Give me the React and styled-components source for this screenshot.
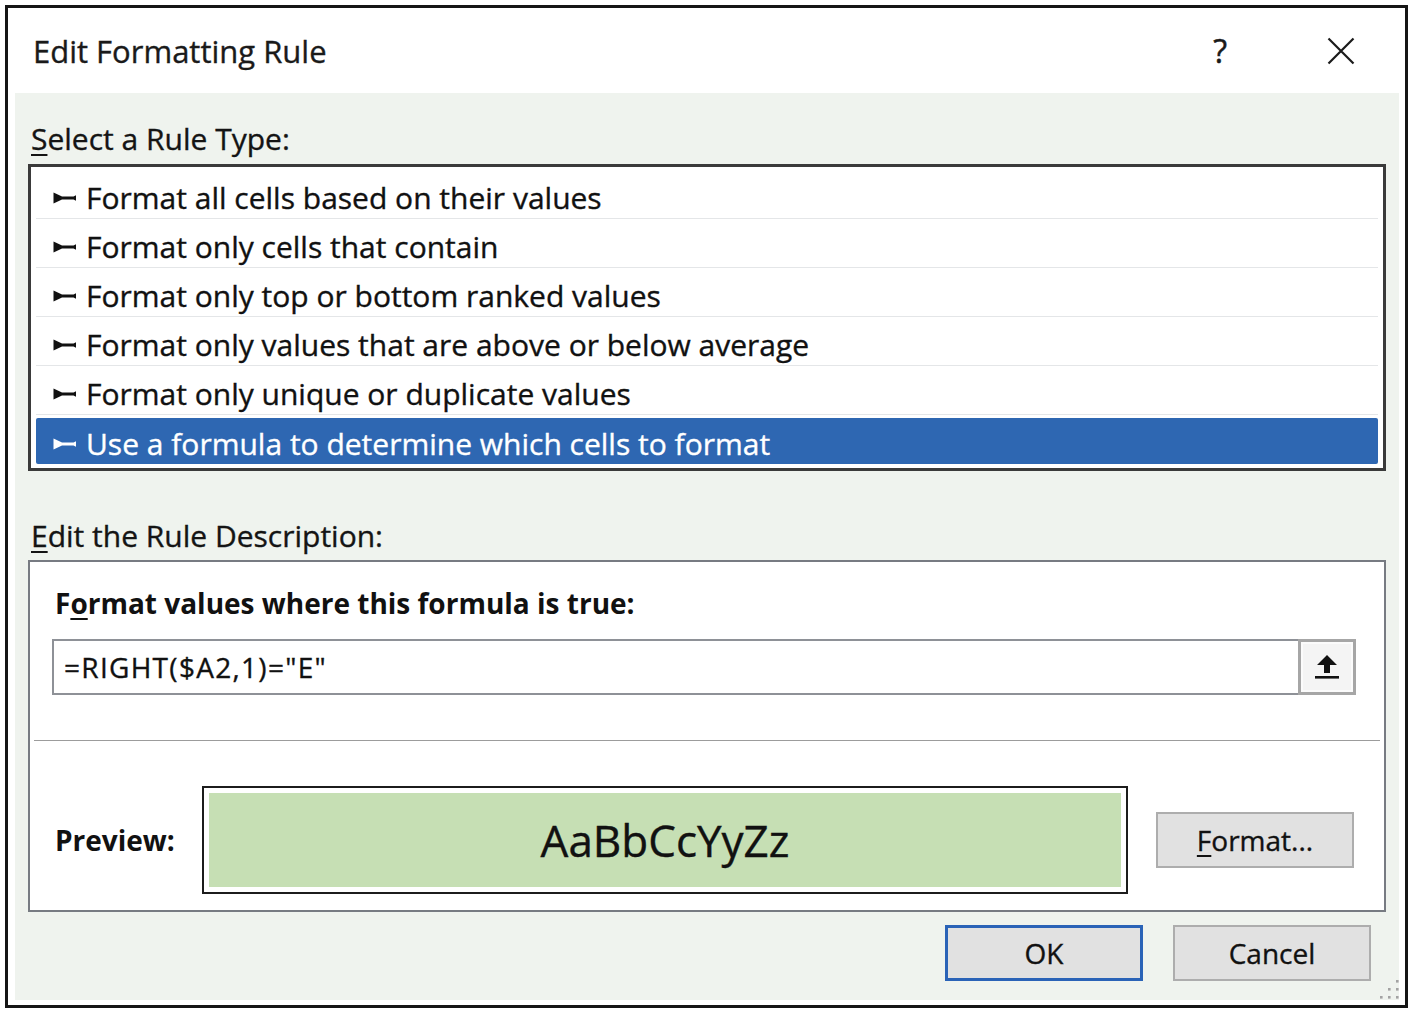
import React from 'react';
import styled, { createGlobalStyle } from 'styled-components';

const Global = createGlobalStyle`
  html, body { margin: 0; padding: 0; background: #ffffff; }
  body { font-family: "Open Sans", "Noto Sans", "Liberation Sans", sans-serif; color: #111; }
  * { box-sizing: border-box; }
`;

const Window = styled.div`
  position: relative;
  margin: 5px 0 0 5px;
  width: 1403px;
  height: 1003px;
  border: 3px solid #151515;
  background: #ffffff;
  display: flex;
  flex-direction: column;
`;

const TitleBar = styled.div`
  flex: none;
  height: 85px;
  display: flex;
  align-items: center;
  padding: 0 50px 0 25px;
`;

const Title = styled.div`
  flex: 1;
  font-size: 31px;
  line-height: 40px;
  color: #1a1a1a;
  -webkit-text-stroke: 0.35px currentColor;
`;

const HelpGlyph = styled.span`
  font-size: 32px;
  line-height: 40px;
  color: #1a1a1a;
  margin-right: 100px;
  -webkit-text-stroke: 0.5px currentColor;
`;

const CloseIcon = styled.svg`
  width: 28px;
  height: 28px;
  display: block;
`;

const Panel = styled.div`
  flex: 1;
  margin: 0 6px 5px 7px;
  background: #eff3ee;
  display: flex;
  flex-direction: column;
  padding: 26px 13px 19px 13px;
`;

const SectionLabel = styled.div`
  font-size: 30px;
  line-height: 40px;
  height: 40px;
  padding-left: 3px;
  color: #141414;
  -webkit-text-stroke: 0.35px currentColor;
  margin-top: ${(p) => p.$top || 0}px;
  u { text-decoration-thickness: 2px; text-underline-offset: 4px; }
`;

const RuleList = styled.div`
  margin-top: 5px;
  height: 307px;
  background: #fff;
  border: 3px solid #3a3a3a;
  padding: 3px 5px 4px 5px;
  display: flex;
  flex-direction: column;
`;

const RuleRow = styled.div`
  display: flex;
  align-items: center;
  gap: 10px;
  height: ${(p) => (p.$selected ? 46 : 49)}px;
  margin-top: ${(p) => (p.$selected ? 3 : 0)}px;
  padding: ${(p) => (p.$selected ? '5px 0 0 17px' : '8px 0 0 17px')};
  border-bottom: ${(p) => (p.$selected ? 'none' : '1px solid #e4e6e8')};
  background: ${(p) => (p.$selected ? '#2e67b2' : 'transparent')};
  border-radius: ${(p) => (p.$selected ? '2px' : '0')};
  color: ${(p) => (p.$selected ? '#ffffff' : '#111111')};
  font-size: 30px;
  line-height: 40px;
  white-space: nowrap;
  -webkit-text-stroke: 0.35px currentColor;
`;

const Bullet = styled.svg`
  width: 23px;
  height: 12px;
  flex: none;
  display: block;
`;

const DescPanel = styled.div`
  margin-top: 4px;
  height: 352px;
  background: #ffffff;
  border: 2px solid #777b82;
  padding-top: 21px;
  display: flex;
  flex-direction: column;
`;

const BoldLabel = styled.div`
  font-size: 28px;
  font-weight: 700;
  line-height: 40px;
  height: 40px;
  padding-left: 25px;
  color: #111;
  u { text-decoration-thickness: 2px; text-underline-offset: 4px; }
`;

const FormulaRow = styled.div`
  margin-top: 16px;
  display: flex;
  height: 56px;
  padding: 0 28px 0 22px;
`;

const FormulaInput = styled.div`
  flex: 1;
  border: 2px solid #8e9197;
  border-right: none;
  display: flex;
  align-items: center;
  padding-left: 10px;
  font-size: 28px;
  line-height: 40px;
  letter-spacing: 1.3px;
  color: #111;
  white-space: nowrap;
  -webkit-text-stroke: 0.35px currentColor;
`;

const CollapseButton = styled.div`
  width: 58px;
  flex: none;
  border: 3px solid #a6a6a6;
  background: #f4f4f4;
  box-shadow: inset 0 0 0 2px #fbfbfb;
  display: flex;
  align-items: center;
  justify-content: center;
`;

const Divider = styled.div`
  margin: 45px 4px 0 4px;
  height: 1px;
  background: #9c9c9c;
`;

const PreviewRow = styled.div`
  margin-top: 45px;
  height: 108px;
  display: flex;
  align-items: center;
  padding: 0 30px 0 25px;
`;

const PreviewLabel = styled.div`
  width: 147px;
  flex: none;
  font-size: 28px;
  font-weight: 700;
  line-height: 40px;
  color: #111;
`;

const PreviewBox = styled.div`
  width: 926px;
  height: 108px;
  flex: none;
  border: 2px solid #1c1c1c;
  padding: 5px;
  background: #fff;
`;

const PreviewFill = styled.div`
  width: 100%;
  height: 100%;
  background: #c6dfb4;
  display: flex;
  align-items: center;
  justify-content: center;
  font-size: 44px;
  color: #111;
  -webkit-text-stroke: 0.4px currentColor;
`;

const DialogButton = styled.div`
  width: 198px;
  height: 56px;
  flex: none;
  background: #e1e1e1;
  border: ${(p) => (p.$primary ? '3px solid #2a63b7' : '2px solid #adadad')};
  display: flex;
  align-items: center;
  justify-content: center;
  font-size: 28px;
  line-height: 40px;
  color: #111;
  -webkit-text-stroke: 0.35px currentColor;
  margin-left: ${(p) => p.$left || 0}px;
  u { text-decoration-thickness: 2px; text-underline-offset: 4px; }
`;

const ButtonRow = styled.div`
  margin-top: 13px;
  display: flex;
  justify-content: flex-end;
  gap: 30px;
  padding-right: 15px;
`;

const Grip = styled.svg`
  position: absolute;
  right: 6px;
  bottom: 6px;
  width: 20px;
  height: 20px;
`;

const rules = [
  'Format all cells based on their values',
  'Format only cells that contain',
  'Format only top or bottom ranked values',
  'Format only values that are above or below average',
  'Format only unique or duplicate values',
  'Use a formula to determine which cells to format',
];

const BulletIcon = ({ color }) => (
  <Bullet viewBox="0 0 23 12">
    <path d="M0.5 0.5 L9 4.4 L20.5 4.4 L23 3.2 L23 8.8 L20.5 7.6 L9 7.6 L0.5 11.5 Z" fill={color} />
  </Bullet>
);

export default function App() {
  return (
    <>
      <Global />
      <Window>
        <TitleBar>
          <Title>Edit Formatting Rule</Title>
          <HelpGlyph>?</HelpGlyph>
          <CloseIcon viewBox="0 0 28 28">
            <path d="M1.5 1.5 L26.5 26.5 M26.5 1.5 L1.5 26.5" stroke="#1a1a1a" strokeWidth="2.2" fill="none" />
          </CloseIcon>
        </TitleBar>
        <Panel>
          <SectionLabel>
            <u>S</u>elect a Rule Type:
          </SectionLabel>
          <RuleList>
            {rules.map((r, i) => {
              const sel = i === rules.length - 1;
              return (
                <RuleRow key={r} $selected={sel}>
                  <BulletIcon color={sel ? '#ffffff' : '#111111'} />
                  <span>{r}</span>
                </RuleRow>
              );
            })}
          </RuleList>
          <SectionLabel $top={45}>
            <u>E</u>dit the Rule Description:
          </SectionLabel>
          <DescPanel>
            <BoldLabel>
              F<u>o</u>rmat values where this formula is true:
            </BoldLabel>
            <FormulaRow>
              <FormulaInput>=RIGHT($A2,1)="E"</FormulaInput>
              <CollapseButton>
                <svg width="26" height="26" viewBox="0 0 26 26">
                  <path d="M13 1 L23 11 L16 11 L16 19 L10 19 L10 11 L3 11 Z" fill="#111" />
                  <rect x="1" y="22" width="24" height="2.6" fill="#111" />
                </svg>
              </CollapseButton>
            </FormulaRow>
            <Divider />
            <PreviewRow>
              <PreviewLabel>Preview:</PreviewLabel>
              <PreviewBox>
                <PreviewFill>AaBbCcYyZz</PreviewFill>
              </PreviewBox>
              <DialogButton $left={28}>
                <span>
                  <u>F</u>ormat...
                </span>
              </DialogButton>
            </PreviewRow>
          </DescPanel>
          <ButtonRow>
            <DialogButton $primary>OK</DialogButton>
            <DialogButton>Cancel</DialogButton>
          </ButtonRow>
        </Panel>
        <Grip viewBox="0 0 20 20">
          {[
            [16, 0],
            [8, 8],
            [16, 8],
            [0, 16],
            [8, 16],
            [16, 16],
          ].map(([x, y]) => (
            <rect key={`${x}-${y}`} x={x + 1} y={y + 1} width="2.6" height="2.6" fill="#a3a3a3" />
          ))}
        </Grip>
      </Window>
    </>
  );
}
